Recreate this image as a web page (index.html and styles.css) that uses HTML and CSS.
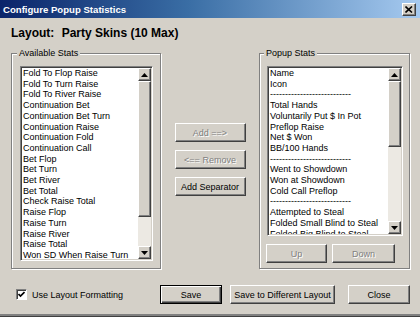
FILE: index.html
```html
<!DOCTYPE html>
<html lang="en">
<head>
    <meta charset="UTF-8">
    <meta name="viewport" content="width=device-width, initial-scale=1.0">
    <title>Configure Popup Statistics</title>
    <link rel="stylesheet" href="styles.css">
</head>
<body>
    <div class="window">
        <div class="titlebar">
            <span class="title">Configure Popup Statistics</span>
            <span class="close-btn">
                <svg width="8" height="7" viewBox="0 0 8 7"><path d="M0.5 0.5 L7 6.5 M7 0.5 L0.5 6.5" stroke="#000" stroke-width="1.6" fill="none"/></svg>
            </span>
        </div>

        <div class="layout-line">
            <span class="layout-key">Layout:</span>
            <span class="layout-name">Party Skins (10 Max)</span>
        </div>

        <div class="main">
            <fieldset class="group group-available">
                <legend>Available Stats</legend>
                <div class="listbox list-available">
                    <ul class="items">
                        <li>Fold To Flop Raise</li>
                        <li>Fold To Turn Raise</li>
                        <li>Fold To River Raise</li>
                        <li>Continuation Bet</li>
                        <li>Continuation Bet Turn</li>
                        <li>Continuation Raise</li>
                        <li>Continuation Fold</li>
                        <li>Continuation Call</li>
                        <li>Bet Flop</li>
                        <li>Bet Turn</li>
                        <li>Bet River</li>
                        <li>Bet Total</li>
                        <li>Check Raise Total</li>
                        <li>Raise Flop</li>
                        <li>Raise Turn</li>
                        <li>Raise River</li>
                        <li>Raise Total</li>
                        <li>Won SD When Raise Turn</li>
                    </ul>
                    <div class="scrollbar">
                        <span class="arrow"><svg width="7" height="4" viewBox="0 0 7 4"><polygon points="3.5,0 7,4 0,4" fill="#000"/></svg></span>
                        <span class="thumb thumb-available"></span>
                        <span class="track"></span>
                        <span class="arrow"><svg width="7" height="4" viewBox="0 0 7 4"><polygon points="0,0 7,0 3.5,4" fill="#000"/></svg></span>
                    </div>
                </div>
            </fieldset>

            <div class="mid-buttons">
                <button class="btn btn-mid" disabled>Add ==&gt;</button>
                <button class="btn btn-mid" disabled>&lt;== Remove</button>
                <button class="btn btn-mid">Add Separator</button>
            </div>

            <fieldset class="group group-popup">
                <legend>Popup Stats</legend>
                <div class="listbox list-popup">
                    <ul class="items">
                        <li>Name</li>
                        <li>Icon</li>
                        <li>---------------------------</li>
                        <li>Total Hands</li>
                        <li>Voluntarily Put $ In Pot</li>
                        <li>Preflop Raise</li>
                        <li>Net $ Won</li>
                        <li>BB/100 Hands</li>
                        <li>---------------------------</li>
                        <li>Went to Showdown</li>
                        <li>Won at Showdown</li>
                        <li>Cold Call Preflop</li>
                        <li>---------------------------</li>
                        <li>Attempted to Steal</li>
                        <li>Folded Small Blind to Steal</li>
                        <li>Folded Big Blind to Steal</li>
                    </ul>
                    <div class="scrollbar">
                        <span class="arrow"><svg width="7" height="4" viewBox="0 0 7 4"><polygon points="3.5,0 7,4 0,4" fill="#000"/></svg></span>
                        <span class="thumb thumb-popup"></span>
                        <span class="track"></span>
                        <span class="arrow"><svg width="7" height="4" viewBox="0 0 7 4"><polygon points="0,0 7,0 3.5,4" fill="#000"/></svg></span>
                    </div>
                </div>
                <div class="order-buttons">
                    <button class="btn btn-up" disabled>Up</button>
                    <button class="btn btn-down" disabled>Down</button>
                </div>
            </fieldset>
        </div>

        <div class="footer">
            <label class="check">
                <span class="checkbox">
                    <svg width="7" height="7" viewBox="0 0 7 7"><path d="M0.5 3 L2.5 5 L6.5 1" stroke="#000" stroke-width="1.7" fill="none"/></svg>
                </span>
                Use Layout Formatting
            </label>
            <div class="actions">
                <button class="btn btn-default">Save</button>
                <button class="btn btn-save-as">Save to Different Layout</button>
                <button class="btn btn-close">Close</button>
            </div>
        </div>
    </div>
</body>
</html>
```

FILE: styles.css
```css
body {
    margin: 0;
    padding: 0;
    background-color: #d4d0c8;
    font-family: "Liberation Sans", Arial, sans-serif;
    font-size: 9px;
    color: #000;
}
.window {
    width: 420px;
    height: 317px;
    box-sizing: border-box;
    background-color: #d4d0c8;
    border-bottom: 1px solid #404040;
    box-shadow: inset 0 -2px 0 #808080;
}
.titlebar {
    height: 18px;
    display: flex;
    align-items: center;
    justify-content: space-between;
    padding: 0 4px 0 3px;
    background: linear-gradient(to right, #0a246a, #3a6ea5 45%, #a6caf0);
}
.title {
    color: white;
    font-weight: bold;
    font-size: 9.6px;
}
.close-btn {
    width: 12px;
    height: 11px;
    display: flex;
    align-items: center;
    justify-content: center;
    background-color: #d4d0c8;
    border: 1px solid;
    border-color: #fff #404040 #404040 #fff;
    box-shadow: inset -1px -1px 0 #808080;
}
.layout-line {
    margin-top: 8px;
    padding-left: 11px;
    line-height: 14px;
    font-size: 12px;
    font-weight: bold;
}
.layout-key {
    margin-right: 4px;
}
.main {
    display: flex;
    align-items: stretch;
    margin-top: 8px;
    padding-left: 11px;
}
.group {
    margin: 0;
    box-sizing: border-box;
    border: 1px solid #808080;
    box-shadow: inset 1px 1px 0 #fff, 1px 1px 0 #fff;
}
.group legend {
    margin-left: -3px;
    padding: 0 2px;
    line-height: 11px;
    background-color: #d4d0c8;
}
.group-available {
    width: 150px;
    padding: 7px 7px 6px 8px;
}
.group-popup {
    width: 151px;
    padding: 7px 6px 5px 7px;
}
.listbox {
    display: flex;
    box-sizing: border-box;
    background-color: #fff;
    border: 1px solid;
    border-color: #808080 #fff #fff #808080;
    box-shadow: inset 1px 1px 0 #404040, inset -1px -1px 0 #d4d0c8;
    padding: 1px;
    overflow: hidden;
}
.list-available {
    height: 195px;
}
.list-popup {
    height: 170px;
}
.items {
    flex: 1;
    margin: 0;
    padding: 0 0 0 1px;
    list-style: none;
    line-height: 10.7px;
    white-space: nowrap;
    overflow: hidden;
}
.scrollbar {
    width: 13px;
    display: flex;
    flex-direction: column;
    background-color: #ece9e3;
}
.arrow, .thumb {
    box-sizing: border-box;
    background-color: #d4d0c8;
    border: 1px solid;
    border-color: #fff #404040 #404040 #fff;
    box-shadow: inset -1px -1px 0 #808080;
}
.arrow {
    height: 13px;
    display: flex;
    align-items: center;
    justify-content: center;
}
.thumb-available {
    height: 136px;
}
.thumb-popup {
    height: 66px;
}
.track {
    flex: 1;
}
.mid-buttons {
    width: 98px;
    display: flex;
    flex-direction: column;
    align-items: center;
    gap: 8px;
    padding-top: 75px;
}
.btn {
    height: 19px;
    box-sizing: border-box;
    padding: 0;
    font-family: "Liberation Sans", Arial, sans-serif;
    font-size: 9px;
    color: #000;
    background-color: #d4d0c8;
    border: 1px solid;
    border-color: #fff #404040 #404040 #fff;
    box-shadow: inset -1px -1px 0 #808080;
}
.btn:disabled {
    color: #808080;
    text-shadow: 1px 1px 0 #fff;
}
.btn-mid {
    width: 71px;
}
.order-buttons {
    display: flex;
    margin-top: 8px;
    margin-left: -1px;
    gap: 5px;
}
.btn-up {
    width: 61px;
}
.btn-down {
    width: 63px;
}
.footer {
    display: flex;
    align-items: center;
    margin-top: 16px;
    padding: 0 10px 0 16px;
}
.check {
    display: flex;
    align-items: center;
    gap: 5px;
}
.checkbox {
    width: 11px;
    height: 11px;
    box-sizing: border-box;
    display: flex;
    align-items: center;
    justify-content: center;
    background-color: #fff;
    border: 1px solid;
    border-color: #808080 #fff #fff #808080;
    box-shadow: inset 1px 1px 0 #404040;
}
.actions {
    display: flex;
    margin-left: auto;
}
.btn-default {
    width: 62px;
    border: 1px solid #000;
    box-shadow: inset 1px 1px 0 #fff, inset -1px -1px 0 #404040, inset -2px -2px 0 #808080;
}
.btn-save-as {
    width: 105px;
    margin-left: 8px;
}
.btn-close {
    width: 62px;
    margin-left: 13px;
}
```
